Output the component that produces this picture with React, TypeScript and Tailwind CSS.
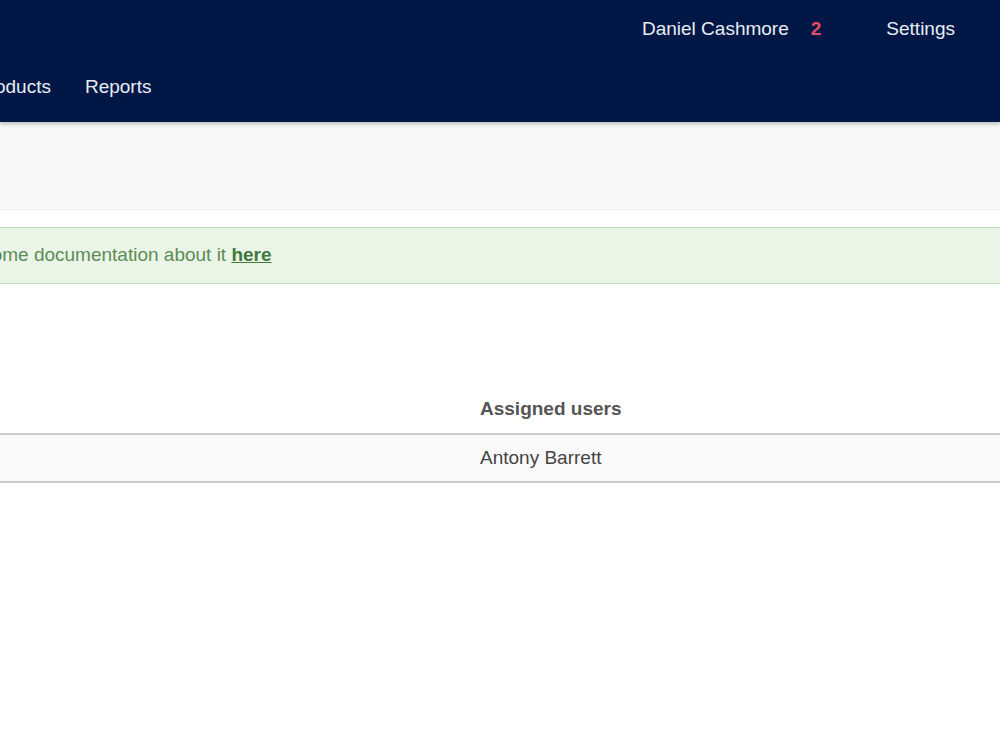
import React from 'react';

const navItems = ['Dashboard', 'Products', 'Reports'];

const App = () => {
  return (
    <div className="w-[1000px] h-[750px] overflow-hidden bg-white font-['Liberation_Sans',Arial,sans-serif]">
      {/* Top bar */}
      <header className="relative z-10 h-[122px] bg-[#011847] text-[#e8ecf4] shadow-[0_2px_4px_rgba(0,0,0,0.25)]">
        <div className="flex h-[58px] items-center justify-end pr-[45px] text-[19px]">
          <span>Daniel Cashmore</span>
          <span className="ml-[22px] font-bold text-[#ea4a64]">2</span>
          <span className="ml-[65px]">Settings</span>
        </div>
        <nav className="-ml-[151px] flex h-[58px] items-center gap-[34px] text-[19px]">
          {navItems.map((item) => (
            <span key={item}>{item}</span>
          ))}
        </nav>
      </header>

      {/* Page title band */}
      <div className="h-[88px] border-b border-[#ececec] bg-[#f8f8f8]" />

      <div className="pt-[17px]">
        <div className="flex h-[57px] items-center border-y border-[#bcd8b4] bg-[#eaf4e7] text-[19px] text-[#5e8c55]">
          <p className="-ml-[127px] whitespace-nowrap">
            You can find some documentation about it{' '}
            <a className="font-bold text-[#3f7a3c] underline">here</a>
          </p>
        </div>

        {/* Users table */}
        <table className="mt-[104px] w-full border-collapse text-[19px]">
          <thead>
            <tr>
              <th className="w-[480px]" />
              <th className="h-[46px] pb-[2px] text-left font-bold text-[#555]">Assigned users</th>
            </tr>
          </thead>
          <tbody>
            <tr className="border-y-2 border-[#cccccc] bg-[#f9f9f9]">
              <td className="h-[48px]" />
              <td className="text-[#444]">Antony Barrett</td>
            </tr>
          </tbody>
        </table>
      </div>
    </div>
  );
};

export default App;
